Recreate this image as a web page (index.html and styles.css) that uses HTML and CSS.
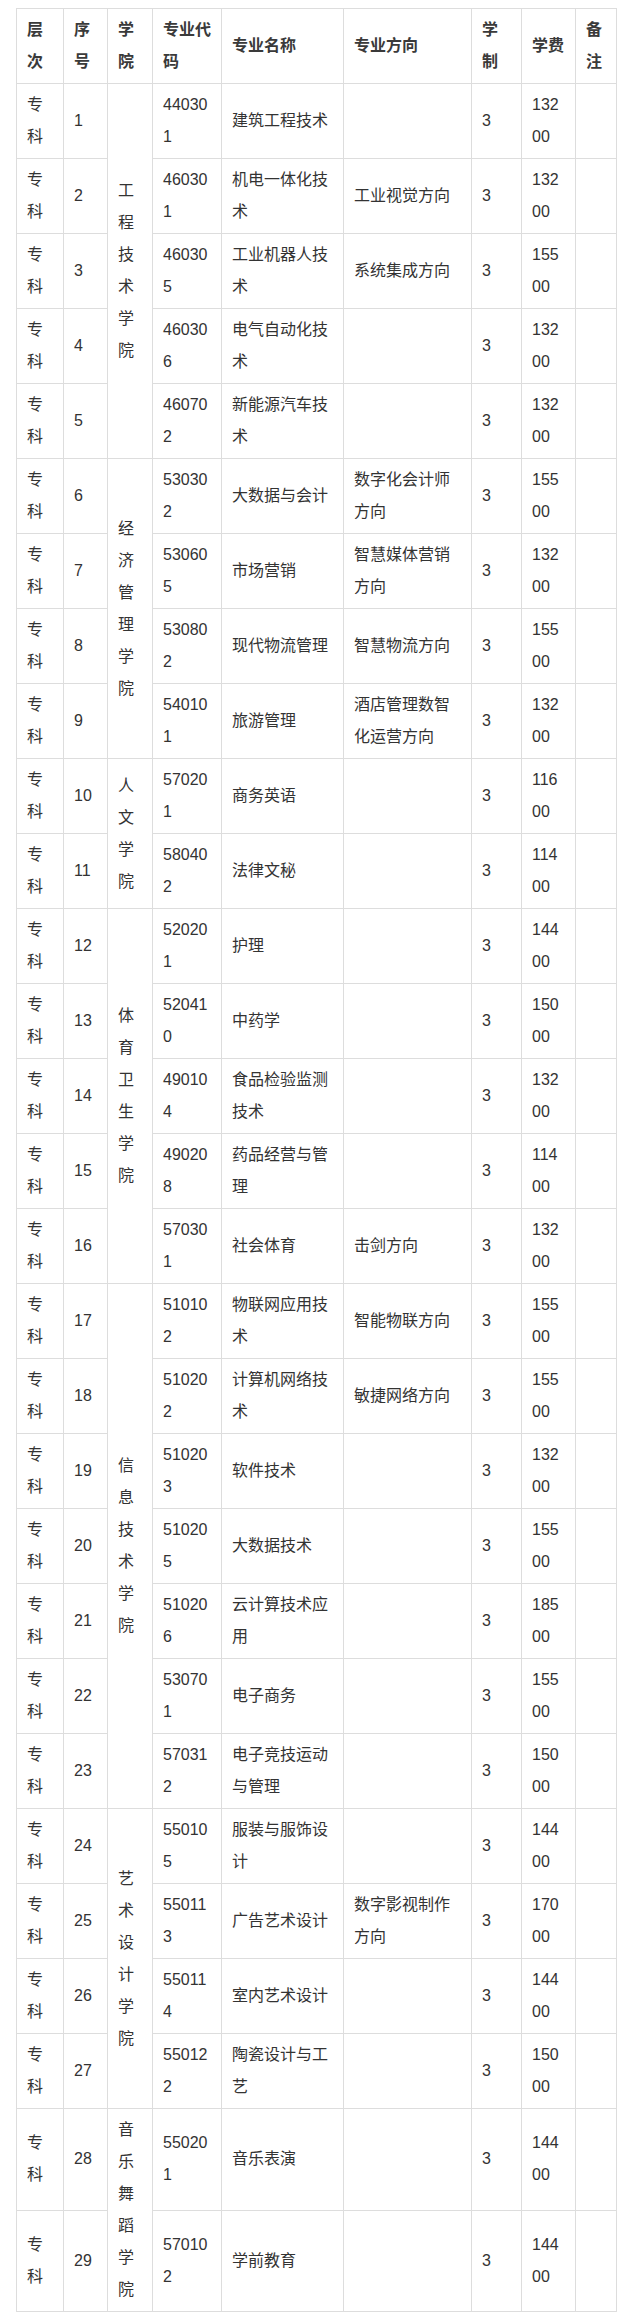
FILE: index.html
```html
<!DOCTYPE html>
<html lang="zh-CN">
<head>
<meta charset="utf-8">
<title>专业一览</title>
<link rel="stylesheet" href="styles.css">
</head>
<body>
<div class="wrap">
<table class="tbl">
<colgroup>
<col class="c-level"><col class="c-no"><col class="c-college"><col class="c-code"><col class="c-name"><col class="c-dir"><col class="c-years"><col class="c-fee"><col class="c-note">
</colgroup>
<thead>
<tr><th>层次</th><th>序号</th><th>学院</th><th>专业代码</th><th>专业名称</th><th>专业方向</th><th>学制</th><th>学费</th><th>备注</th></tr>
</thead>
<tbody>
<tr><td>专科</td><td>1</td><td rowspan="5">工程技术学院</td><td>440301</td><td>建筑工程技术</td><td></td><td>3</td><td>13200</td><td></td></tr>
<tr><td>专科</td><td>2</td><td>460301</td><td>机电一体化技术</td><td>工业视觉方向</td><td>3</td><td>13200</td><td></td></tr>
<tr><td>专科</td><td>3</td><td>460305</td><td>工业机器人技术</td><td>系统集成方向</td><td>3</td><td>15500</td><td></td></tr>
<tr><td>专科</td><td>4</td><td>460306</td><td>电气自动化技术</td><td></td><td>3</td><td>13200</td><td></td></tr>
<tr><td>专科</td><td>5</td><td>460702</td><td>新能源汽车技术</td><td></td><td>3</td><td>13200</td><td></td></tr>
<tr><td>专科</td><td>6</td><td rowspan="4">经济管理学院</td><td>530302</td><td>大数据与会计</td><td>数字化会计师方向</td><td>3</td><td>15500</td><td></td></tr>
<tr><td>专科</td><td>7</td><td>530605</td><td>市场营销</td><td>智慧媒体营销方向</td><td>3</td><td>13200</td><td></td></tr>
<tr><td>专科</td><td>8</td><td>530802</td><td>现代物流管理</td><td>智慧物流方向</td><td>3</td><td>15500</td><td></td></tr>
<tr><td>专科</td><td>9</td><td>540101</td><td>旅游管理</td><td>酒店管理数智化运营方向</td><td>3</td><td>13200</td><td></td></tr>
<tr><td>专科</td><td>10</td><td rowspan="2">人文学院</td><td>570201</td><td>商务英语</td><td></td><td>3</td><td>11600</td><td></td></tr>
<tr><td>专科</td><td>11</td><td>580402</td><td>法律文秘</td><td></td><td>3</td><td>11400</td><td></td></tr>
<tr><td>专科</td><td>12</td><td rowspan="5">体育卫生学院</td><td>520201</td><td>护理</td><td></td><td>3</td><td>14400</td><td></td></tr>
<tr><td>专科</td><td>13</td><td>520410</td><td>中药学</td><td></td><td>3</td><td>15000</td><td></td></tr>
<tr><td>专科</td><td>14</td><td>490104</td><td>食品检验监测技术</td><td></td><td>3</td><td>13200</td><td></td></tr>
<tr><td>专科</td><td>15</td><td>490208</td><td>药品经营与管理</td><td></td><td>3</td><td>11400</td><td></td></tr>
<tr><td>专科</td><td>16</td><td>570301</td><td>社会体育</td><td>击剑方向</td><td>3</td><td>13200</td><td></td></tr>
<tr><td>专科</td><td>17</td><td rowspan="7">信息技术学院</td><td>510102</td><td>物联网应用技术</td><td>智能物联方向</td><td>3</td><td>15500</td><td></td></tr>
<tr><td>专科</td><td>18</td><td>510202</td><td>计算机网络技术</td><td>敏捷网络方向</td><td>3</td><td>15500</td><td></td></tr>
<tr><td>专科</td><td>19</td><td>510203</td><td>软件技术</td><td></td><td>3</td><td>13200</td><td></td></tr>
<tr><td>专科</td><td>20</td><td>510205</td><td>大数据技术</td><td></td><td>3</td><td>15500</td><td></td></tr>
<tr><td>专科</td><td>21</td><td>510206</td><td>云计算技术应用</td><td></td><td>3</td><td>18500</td><td></td></tr>
<tr><td>专科</td><td>22</td><td>530701</td><td>电子商务</td><td></td><td>3</td><td>15500</td><td></td></tr>
<tr><td>专科</td><td>23</td><td>570312</td><td>电子竞技运动与管理</td><td></td><td>3</td><td>15000</td><td></td></tr>
<tr><td>专科</td><td>24</td><td rowspan="4">艺术设计学院</td><td>550105</td><td>服装与服饰设计</td><td></td><td>3</td><td>14400</td><td></td></tr>
<tr><td>专科</td><td>25</td><td>550113</td><td>广告艺术设计</td><td>数字影视制作方向</td><td>3</td><td>17000</td><td></td></tr>
<tr><td>专科</td><td>26</td><td>550114</td><td>室内艺术设计</td><td></td><td>3</td><td>14400</td><td></td></tr>
<tr><td>专科</td><td>27</td><td>550122</td><td>陶瓷设计与工艺</td><td></td><td>3</td><td>15000</td><td></td></tr>
<tr><td>专科</td><td>28</td><td rowspan="2">音乐舞蹈学院</td><td>550201</td><td>音乐表演</td><td></td><td>3</td><td>14400</td><td></td></tr>
<tr><td>专科</td><td>29</td><td>570102</td><td>学前教育</td><td></td><td>3</td><td>14400</td><td></td></tr>
</tbody>
</table>
</div>
</body>
</html>
```
FILE: styles.css
```css
html, body {
  margin: 0;
  padding: 0;
  background: #ffffff;
}
.wrap {
  padding: 8px 0 10px 16px;
}
.tbl {
  border-collapse: collapse;
  table-layout: fixed;
  width: 600px;
  font-family: "Liberation Sans", "Noto Sans CJK SC", sans-serif;
  font-size: 16px;
  line-height: 32px;
  color: #333333;
}
.tbl th,
.tbl td {
  border: 1px solid #dddddd;
  padding: 5px 10px;
  text-align: left;
  vertical-align: middle;
  word-break: break-all;
}
.tbl th {
  font-weight: bold;
  color: #3a3a3a;
}
.c-level { width: 47px; }
.c-no { width: 44px; }
.c-college { width: 45px; }
.c-code { width: 69px; }
.c-name { width: 122px; }
.c-dir { width: 128px; }
.c-years { width: 50px; }
.c-fee { width: 54px; }
.c-note { width: 41px; }
```
